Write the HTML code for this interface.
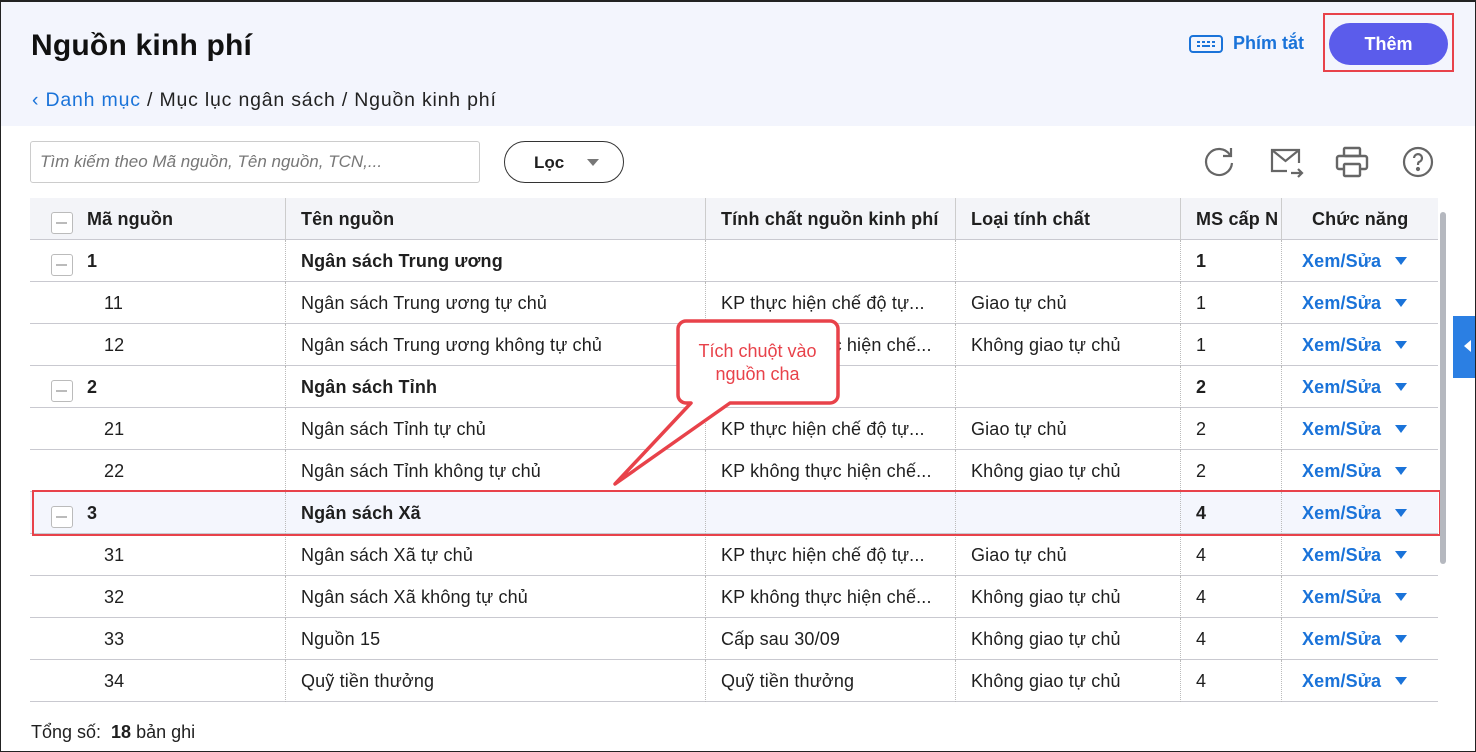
<!DOCTYPE html>
<html><head><meta charset="utf-8"><style>
*{box-sizing:border-box;margin:0;padding:0}
body{width:1476px;height:752px;position:relative;overflow:hidden;background:#fff;font-family:"Liberation Sans",Arial,sans-serif;color:#1f1f1f}
.frame{position:absolute;left:0;top:0;width:1476px;height:752px;border:1px solid #222;border-top:2px solid #222;z-index:50;pointer-events:none}
.hdr{position:absolute;left:0;top:0;width:1476px;height:126px;background:#f3f5fd}
.title{position:absolute;left:31px;top:29px;font-size:30px;font-weight:bold;color:#111;letter-spacing:0.2px}
.bc{position:absolute;left:32px;top:89px;font-size:19.5px;color:#222;letter-spacing:0.8px}
.bc span{color:#1a73d9}
.pt{position:absolute;left:1190px;top:33px;font-size:18px;font-weight:bold;color:#1a73d9}
.them{position:absolute;left:1329px;top:23px;width:119px;height:42px;border-radius:21px;background:#5b5ceb;color:#fff;font-weight:bold;font-size:18px;text-align:center;line-height:42px}
.redbox{position:absolute;border:2px solid #e8424a}
.search{position:absolute;left:30px;top:141px;width:450px;height:42px;border:1px solid #ccc;border-radius:3px;font-style:italic;color:#777;font-size:17px;padding:10px 9px}
.loc{position:absolute;left:504px;top:141px;width:120px;height:42px;border:1px solid #333;border-radius:21px;font-weight:bold;font-size:17px;padding:11px 0 0 29px}
.loc:after{content:"";position:absolute;left:82px;top:17px;border:6px solid transparent;border-top:7px solid #777}
.ic{position:absolute;top:145px}
.row{position:absolute;left:30px;width:1408px;height:42px;border-bottom:1px solid #c9c9d0;font-size:18px;letter-spacing:0.15px}
.row div{position:absolute;top:0;height:42px;line-height:42px;white-space:nowrap;overflow:hidden}
.c1{left:0;width:255px}.c2{left:255px;width:420px;border-left:1px dotted #bbb;padding-left:15px}
.c3{left:675px;width:250px;border-left:1px dotted #bbb;padding-left:15px}
.c4{left:925px;width:225px;border-left:1px dotted #bbb;padding-left:15px}
.c5{left:1150px;width:101px;border-left:1px dotted #bbb;padding-left:15px}
.c6{left:1251px;width:157px;border-left:1px dotted #bbb;padding-left:20px;color:#1a73d9;font-weight:bold}
.c6.a:after{content:"";position:absolute;left:113px;top:17px;border:6px solid transparent;border-top:8px solid #1a73d9}
.h{background:#f3f4f8;font-weight:bold;top:198px}
.b{font-weight:bold}
.cb{position:absolute;left:21px;top:14px;width:22px;height:22px;border:1.5px solid #bbb;border-radius:3px;background:#fff}
.cb:after{content:"";position:absolute;left:4px;top:9px;width:11px;height:1.5px;background:#bbb}
</style></head><body>
<div class="hdr"></div>
<div class="title">Nguồn kinh phí</div>
<div class="bc"><span>‹ Danh mục</span> / Mục lục ngân sách / Nguồn kinh phí</div>
<svg style="position:absolute;left:1189px;top:35px" width="34" height="18"><rect x="1" y="1" width="32" height="16" rx="3" fill="none" stroke="#1a73d9" stroke-width="2"/><g fill="#1a73d9"><rect x="8" y="6" width="3" height="2"/><rect x="13" y="6" width="3" height="2"/><rect x="18" y="6" width="3" height="2"/><rect x="23" y="6" width="3" height="2"/><rect x="8" y="10" width="3" height="2"/><rect x="13" y="10" width="8" height="2"/><rect x="23" y="10" width="3" height="2"/></g></svg>
<div class="pt" style="left:1233px">Phím tắt</div>
<div class="them">Thêm</div>
<div class="redbox" style="left:1323px;top:13px;width:131px;height:59px"></div>
<div class="search">Tìm kiếm theo Mã nguồn, Tên nguồn, TCN,...</div>
<div class="loc">Lọc</div>
<svg class="ic" style="left:1202px" width="34" height="34" fill="none" stroke="#666" stroke-width="2.2"><path d="M28 10A13 13 0 1 0 30 18"/><path d="M29 3v8h-8"/></svg>
<svg class="ic" style="left:1269px" width="36" height="36" fill="none" stroke="#666" stroke-width="2.2"><path d="M18 26H3V5h27v13"/><path d="M3 5l13.5 11L30 5"/><path d="M22 28h11M29 24l4 4-4 4"/></svg>
<svg class="ic" style="left:1335px" width="34" height="34" fill="none" stroke="#666" stroke-width="2.4"><rect x="9" y="3" width="16" height="8" rx="1"/><rect x="2" y="11" width="30" height="13" rx="2"/><rect x="9" y="19" width="16" height="12" rx="1" fill="#fff"/></svg>
<svg class="ic" style="left:1402px" width="34" height="34" fill="none" stroke="#666" stroke-width="2.2"><circle cx="16" cy="17" r="14"/><path d="M12 13a4 4 0 1 1 5 4c-1 .5-1 1.5-1 3"/><circle cx="16" cy="24" r="1" fill="#666"/></svg>

<div class="row h"><span class="cb"></span><div class="c1" style="left:57px">Mã nguồn</div><div class="c2" style="border-left:1px solid #ccc">Tên nguồn</div><div class="c3" style="border-left:1px solid #ccc">Tính chất nguồn kinh phí</div><div class="c4" style="border-left:1px solid #ccc">Loại tính chất</div><div class="c5" style="border-left:1px solid #ccc">MS cấp N</div><div class="c6" style="border-left:1px solid #ccc;color:#1f1f1f;padding-left:30px">Chức năng</div></div>

<div class="row b" style="top:240px"><span class="cb"></span><div class="c1" style="left:57px">1</div><div class="c2">Ngân sách Trung ương</div><div class="c3"></div><div class="c4"></div><div class="c5">1</div><div class="c6 a">Xem/Sửa</div></div>
<div class="row" style="top:282px"><div class="c1" style="left:74px">11</div><div class="c2">Ngân sách Trung ương tự chủ</div><div class="c3">KP thực hiện chế độ tự...</div><div class="c4">Giao tự chủ</div><div class="c5">1</div><div class="c6 a">Xem/Sửa</div></div>
<div class="row" style="top:324px"><div class="c1" style="left:74px">12</div><div class="c2">Ngân sách Trung ương không tự chủ</div><div class="c3">KP không thực hiện chế...</div><div class="c4">Không giao tự chủ</div><div class="c5">1</div><div class="c6 a">Xem/Sửa</div></div>
<div class="row b" style="top:366px"><span class="cb"></span><div class="c1" style="left:57px">2</div><div class="c2">Ngân sách Tỉnh</div><div class="c3"></div><div class="c4"></div><div class="c5">2</div><div class="c6 a">Xem/Sửa</div></div>
<div class="row" style="top:408px"><div class="c1" style="left:74px">21</div><div class="c2">Ngân sách Tỉnh tự chủ</div><div class="c3">KP thực hiện chế độ tự...</div><div class="c4">Giao tự chủ</div><div class="c5">2</div><div class="c6 a">Xem/Sửa</div></div>
<div class="row" style="top:450px"><div class="c1" style="left:74px">22</div><div class="c2">Ngân sách Tỉnh không tự chủ</div><div class="c3">KP không thực hiện chế...</div><div class="c4">Không giao tự chủ</div><div class="c5">2</div><div class="c6 a">Xem/Sửa</div></div>
<div class="row b" style="top:492px;background:#f4f6fd"><span class="cb"></span><div class="c1" style="left:57px">3</div><div class="c2">Ngân sách Xã</div><div class="c3"></div><div class="c4"></div><div class="c5">4</div><div class="c6 a">Xem/Sửa</div></div>
<div class="row" style="top:534px"><div class="c1" style="left:74px">31</div><div class="c2">Ngân sách Xã tự chủ</div><div class="c3">KP thực hiện chế độ tự...</div><div class="c4">Giao tự chủ</div><div class="c5">4</div><div class="c6 a">Xem/Sửa</div></div>
<div class="row" style="top:576px"><div class="c1" style="left:74px">32</div><div class="c2">Ngân sách Xã không tự chủ</div><div class="c3">KP không thực hiện chế...</div><div class="c4">Không giao tự chủ</div><div class="c5">4</div><div class="c6 a">Xem/Sửa</div></div>
<div class="row" style="top:618px"><div class="c1" style="left:74px">33</div><div class="c2">Nguồn 15</div><div class="c3">Cấp sau 30/09</div><div class="c4">Không giao tự chủ</div><div class="c5">4</div><div class="c6 a">Xem/Sửa</div></div>
<div class="row" style="top:660px"><div class="c1" style="left:74px">34</div><div class="c2">Quỹ tiền thưởng</div><div class="c3">Quỹ tiền thưởng</div><div class="c4">Không giao tự chủ</div><div class="c5">4</div><div class="c6 a">Xem/Sửa</div></div>

<div class="redbox" style="left:32px;top:490px;width:1409px;height:46px"></div>
<div style="position:absolute;left:1440px;top:212px;width:6px;height:352px;background:#b5b8bf;border-radius:3px"></div>
<div style="position:absolute;left:1453px;top:316px;width:23px;height:62px;background:#2b7fe3"></div>
<div style="position:absolute;left:1464px;top:340px;border:6px solid transparent;border-right:7px solid #fff;border-left:0"></div>

<svg style="position:absolute;left:600px;top:310px" width="250" height="190"><path d="M86 11h144a8 8 0 0 1 8 8v66a8 8 0 0 1-8 8H130L15 174l76-81H86a8 8 0 0 1-8-8V19a8 8 0 0 1 8-8z" fill="#fff" stroke="#e8424a" stroke-width="3.5" stroke-linejoin="round"/></svg>
<div style="position:absolute;left:680px;top:340px;width:155px;text-align:center;color:#e8424a;font-size:18px;line-height:23px">Tích chuột vào nguồn cha</div>

<div style="position:absolute;left:31px;top:722px;font-size:18px">Tổng số:&nbsp; <b>18</b> bản ghi</div>
<div class="frame"></div>
</body></html>
